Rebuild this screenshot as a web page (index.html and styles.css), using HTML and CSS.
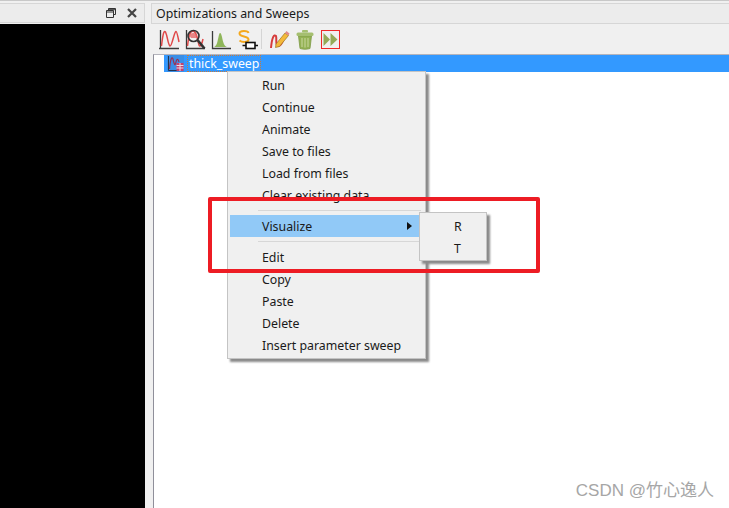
FILE: index.html
```html
<!DOCTYPE html>
<html lang="en">
<head>
<meta charset="utf-8">
<title>Optimizations and Sweeps</title>
<link rel="stylesheet" href="styles.css">
</head>
<body>
<div class="app">
  <section class="left-pane">
    <header class="left-head">
      <svg class="dock-icon" width="12" height="12" viewBox="0 0 12 12"><path d="M3.500 3.500V1.500H10.500V7.500H8.500M1.500 3.500H8.500V10.500H1.500ZM1.500 5H8.500M3.500 2.700H10.500" fill="none" stroke="#333" stroke-width="1"/></svg>
      <svg class="dock-icon" width="12" height="12" viewBox="0 0 12 12"><path d="M2 2L10 10M10 2L2 10" fill="none" stroke="#444" stroke-width="2.200"/></svg>
    </header>
    <div class="black-view"></div>
  </section>
  <section class="right-pane">
    <header class="right-head">Optimizations and Sweeps</header>
    <div class="toolbar">
      <svg class="tool" width="24" height="24" viewBox="0 0 24 24"><path d="M2.500 3V21.500H21M1 21.500H2.500" fill="none" stroke="#3a3a3a" stroke-width="1.300"/><path d="M3.500 19C5 6 6 3 7.500 5C9.500 9 10 18 12 19C14 19.500 16 5 18 4.500C19 4.500 20 10 21 15" fill="none" stroke="#e04848" stroke-width="1.500"/></svg>
      <svg class="tool" width="24" height="24" viewBox="0 0 24 24"><path d="M2.500 3V21.500H21" fill="none" stroke="#3a3a3a" stroke-width="1.300"/><path d="M3.500 19C5 8 6 4 9 4C12 4 13 10 15 18C16 21 18 17 19 12" fill="none" stroke="#e04848" stroke-width="1.500"/><circle cx="9.500" cy="9" r="5.500" fill="none" stroke="#333" stroke-width="1.600"/><path d="M13.500 13L20.500 21.500" stroke="#333" stroke-width="2.600"/><path d="M5 8C7 6 10 5 13 8L12 11H7Z" fill="#e76a6a" opacity=".8"/></svg>
      <svg class="tool" width="24" height="24" viewBox="0 0 24 24"><path d="M2.500 4V21.500H21" fill="none" stroke="#3a3a3a" stroke-width="1.300"/><path d="M4 20C7 19 7.500 14 8.500 10C9 7.500 9.500 6 10 6C11 6 11.500 8 12 10C13 15 14 19 17 20Z" fill="#8fb65a"/></svg>
      <svg class="tool" width="24" height="24" viewBox="0 0 24 24"><path d="M12.500 6C12 3.500 3.500 3 3.500 6.500C3.500 10.500 12.500 8.500 12.500 12.500C12.500 15.500 6 15.500 3.500 13.500" fill="none" stroke="#f5a81c" stroke-width="2"/><path d="M6.500 18.500H10M19 18.500H22" stroke="#111" stroke-width="1.300"/><rect x="10" y="15.500" width="9" height="6" fill="#fff" stroke="#111" stroke-width="1.600"/></svg>
      <span class="tool-sep"></span>
      <svg class="tool" width="24" height="24" viewBox="0 0 24 24"><path d="M4 21C5 10 7 7 9 9C10 12 8 18 11 19C14 19 16 14 17 10" fill="none" stroke="#d63c3c" stroke-width="2"/><path d="M9 17L18 6L21.500 8.500L12.500 19.500L8.500 20.500Z" fill="#f4b93a" stroke="#9a7420" stroke-width=".7"/><path d="M18 6L19.500 4L22.500 6.500L21.500 8.500Z" fill="#e28a8a"/></svg>
      <svg class="tool" width="24" height="24" viewBox="0 0 24 24"><path d="M5.500 9H18.500L17 21.500C14 22.500 10 22.500 7 21.500Z" fill="#94b254" stroke="#7d9a48" stroke-width=".8"/><rect x="3.500" y="5.500" width="17" height="3.500" rx="1.500" fill="#a5bf70"/><rect x="9" y="3" width="6" height="2.500" rx="1" fill="#a5bf70"/><path d="M9 11V20M12 11V20.500M15 11V20" stroke="#c5d699" stroke-width="1.100"/></svg>
      <span class="tool-run"><svg width="17" height="17" viewBox="0 0 17 17"><path d="M1.500 2L8 8.500L1.500 15ZM8.500 2L15.500 8.500L8.500 15Z" fill="#94aa58"/></svg></span>
    </div>
    <div class="tree">
      <div class="tree-row">
        <svg class="tree-icon" width="17" height="17" viewBox="0 0 17 17"><rect width="17" height="17" fill="#3a8ee6"/><path d="M1.500 1V15.500H16" fill="none" stroke="#20344f" stroke-width="1"/><path d="M2.500 14C3.500 3 5 1 6 4C7 9 8 12 9 7C9.500 4 11 3 12 7" fill="none" stroke="#9c3050" stroke-width="1.200"/><rect x="9.500" y="8" width="7" height="8" fill="#c6416d"/><path d="M9.500 10.500H16.500M9.500 13H16.500M13 8V16" stroke="#e9dbe6" stroke-width="1"/></svg>
        <span class="tree-label">thick_sweep</span>
      </div>
    </div>
  </section>
</div>

<nav class="menu">
  <div class="menu-item">Run</div>
  <div class="menu-item">Continue</div>
  <div class="menu-item">Animate</div>
  <div class="menu-item">Save to files</div>
  <div class="menu-item">Load from files</div>
  <div class="menu-item">Clear existing data</div>
  <div class="menu-sep"></div>
  <div class="menu-item is-active">Visualize<span class="arrow"></span></div>
  <div class="menu-sep"></div>
  <div class="menu-item">Edit</div>
  <div class="menu-item">Copy</div>
  <div class="menu-item">Paste</div>
  <div class="menu-item">Delete</div>
  <div class="menu-item">Insert parameter sweep</div>
</nav>
<nav class="submenu">
  <div class="sub-item">R</div>
  <div class="sub-item">T</div>
</nav>
<div class="annotation"></div>
<div class="watermark">CSDN @竹心逸人</div>
</body>
</html>
```
FILE: styles.css
```css
* { box-sizing: border-box; }
html, body { margin: 0; height: 100%; }
body {
  background: #fff;
  font-family: "Noto Sans", "Open Sans", sans-serif;
  font-size: 12.35px;
  color: #1a1a1a;
  overflow: hidden;
}
.app { display: flex; height: 508px; background: #f0f0f0; padding-top: 2px; gap: 6px; border-top: 1px solid #c8c8c8; }
.left-pane { width: 145px; display: flex; flex-direction: column; gap: 1px; }
.left-head { height: 20px; display: flex; justify-content: flex-end; align-items: center; gap: 9px; padding-right: 6px; background: #ececec; border: 1px solid #d6d6d6; border-left: 0; }
.black-view { flex: 1; background: #000; }
.right-pane { flex: 1; display: flex; flex-direction: column; min-width: 0; }
.right-head { height: 21px; line-height: 19px; padding-left: 4px; background: #ececec; border: 1px solid #d6d6d6; border-right: 0; }
.toolbar { height: 30px; display: flex; align-items: center; padding-left: 7px; gap: 2px; }
.tool { flex: none; }
.tool-sep { width: 1px; height: 20px; background: #d5d5d5; margin: 0 3px 0 -1px; }
.tool-run { width: 19px; height: 19px; margin: 1px 0 0 2px; display: flex; align-items: center; justify-content: center; border: 1px solid #ee2a2a; }
.tree { flex: 1; margin-left: 2px; background: #fff; border-left: 1px solid #8f8f9a; border-top: 1px solid #b4b4bc; padding-left: 10px; }
.tree-row { display: flex; align-items: center; height: 17px; background: #3399ff; gap: 3px; padding-left: 3px; }
.tree-icon { flex: none; }
.tree-label { color: #fff; padding: 0 2px; outline: 1px dotted #c97a3a; outline-offset: -1px; height: 17px; line-height: 17px; }
.menu { position: absolute; left: 227px; top: 71px; width: 199px; padding: 2px 2px 2px; background: #f0f0f0; border: 1px solid #c4c4c4; box-shadow: 3px 3px 2px #8a8a8a; }
.menu-item { height: 22px; line-height: 23px; padding-left: 32px; position: relative; }
.menu-item.is-active { background: #91c9f7; }
.menu-sep { height: 9px; margin-left: 28px; margin-right: 2px; display: flex; }
.menu-sep::before { content: ""; flex: 1; height: 1px; margin-top: 4px; background: #d7d7d7; }
.arrow { position: absolute; right: 11px; top: 7px; border-left: 5px solid #111; border-top: 4px solid transparent; border-bottom: 4px solid transparent; }
.submenu { position: absolute; left: 419px; top: 212px; width: 68px; padding: 3px 2px 1px; background: #f0f0f0; border: 1px solid #c4c4c4; box-shadow: 3px 3px 2px #8a8a8a; }
.sub-item { height: 21.5px; line-height: 21px; padding-left: 32px; }
.annotation { position: absolute; left: 208px; top: 197px; width: 332px; height: 76px; border: 4px solid #ed1c24; border-radius: 2px; }
.watermark { position: absolute; right: 15px; bottom: 7px; font-family: "Liberation Sans", "Noto Sans CJK SC", sans-serif; font-size: 17px; color: #a6a6a6; }
```
